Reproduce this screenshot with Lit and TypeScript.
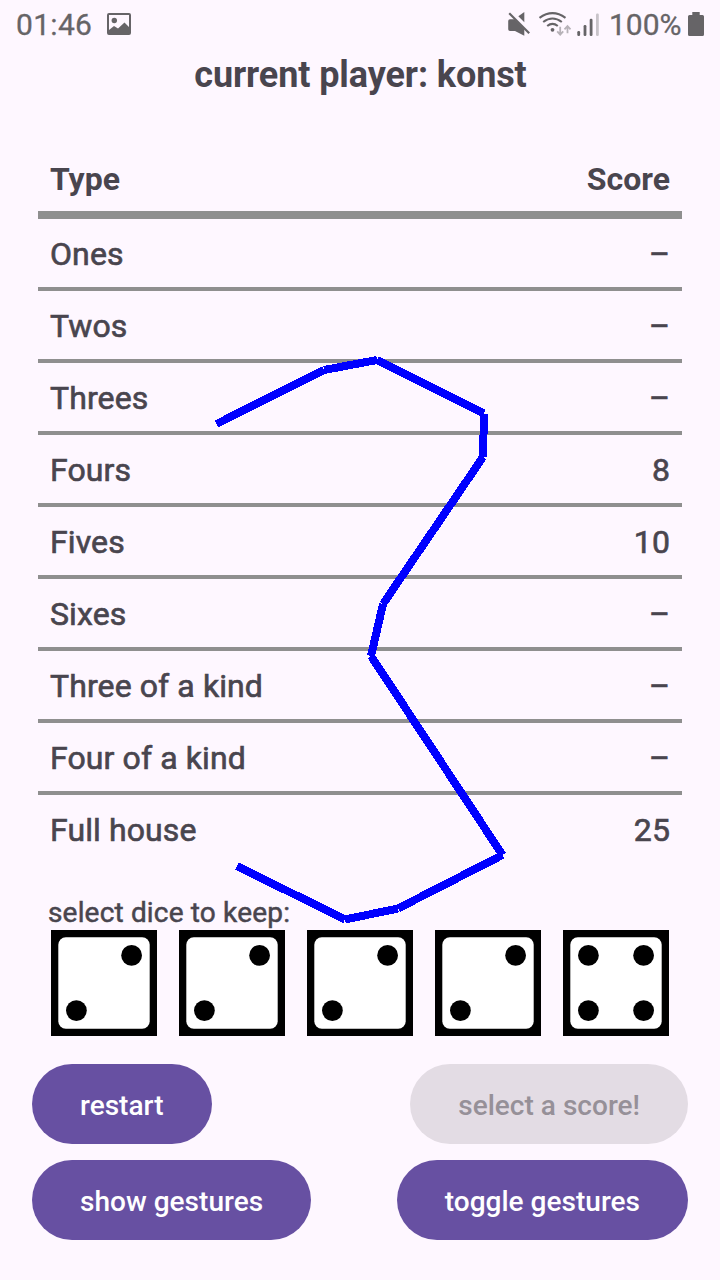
import { LitElement, html, css, svg } from "lit";
import { customElement, property } from "lit/decorators.js";

const scores: [string, string][] = [
  ["Ones", "–"],
  ["Twos", "–"],
  ["Threes", "–"],
  ["Fours", "8"],
  ["Fives", "10"],
  ["Sixes", "–"],
  ["Three of a kind", "–"],
  ["Four of a kind", "–"],
  ["Full house", "25"],
];

const gesture: [number, number][] = [
  [216.5, 424], [324, 370], [377, 360], [484, 413.5], [483, 457], [383, 604],
  [371, 656], [502.5, 855], [398, 908.5], [345, 919.5], [237, 866],
];

const pips: Record<number, [number, number][]> = {
  2: [[80.6, 25.4], [25.4, 80.6]],
  4: [[25.4, 25.4], [80.6, 25.4], [25.4, 80.6], [80.6, 80.6]],
};

@customElement("dice-face")
class DiceFace extends LitElement {
  static styles = css`
    :host { display: block; width: 106px; height: 106px; }
    svg { display: block; }
  `;
  @property({ type: Number }) value = 2;
  render() {
    return html`<svg width="106" height="106" viewBox="0 0 106 106">
      <rect width="106" height="106" fill="#000" />
      <rect x="7.3" y="7.3" width="91.4" height="91.4" rx="7.5" fill="#fff" />
      ${pips[this.value].map(([x, y]) => svg`<circle cx=${x} cy=${y} r="10.4" fill="#000" />`)}
    </svg>`;
  }
}

@customElement("status-bar")
class StatusBar extends LitElement {
  static styles = css`
    :host { display: flex; justify-content: space-between; height: 48px; padding: 0 15px 0 16px; color: #666467; }
    .side { display: flex; align-items: center; height: 48px; }
    .text { font-size: 30px; line-height: 48px; padding-top: 2px; white-space: pre; -webkit-text-stroke: 0.3px #666467; }
    .clock { width: 91px; letter-spacing: 0.3px; }
    .percent { width: 77px; letter-spacing: 0; }
    svg { display: block; }
  `;
  render() {
    return html`
      <div class="side">
        <span class="text clock">01:46</span>
        <svg width="24" height="48" viewBox="107 0 24 48" fill="#666467">
          <path fill-rule="evenodd" d="M109 13h20q2 0 2 2v18q0 2-2 2h-20q-2 0-2-2V15q0-2 2-2zM109 15v15l5-4 4 2.600 6.500-6 4.500 4.500V15z" />
          <circle cx="114.300" cy="20.500" r="2.700" />
        </svg>
      </div>
      <div class="side">
        <svg width="102" height="48" viewBox="507 0 102 48" fill="#666467">
          <path d="M508.200 21q0-1.800 1.800-1.800h4.500L524.300 29V35.800L515 31h-5q-1.800 0-1.800-1.800z" />
          <path d="M518.300 16.300L524.300 12v10.300z" />
          <path d="M509.200 13.200L529.200 33.200" stroke="#666467" stroke-width="2.200" fill="none" />
          <g fill="none" stroke="#666467" stroke-width="2.100">
            <path d="M539.500 17.800Q552.500 8.500 565.500 17.800" />
            <path d="M543.200 22Q552.500 15 561.800 22" />
            <path d="M547.200 26Q552.500 21.800 557.800 26" />
          </g>
          <circle cx="552.500" cy="29.800" r="1.900" />
          <g fill="none" stroke="#b7b2b8" stroke-width="1.800">
            <path d="M560.200 26.800V34.500M557.200 31.300L560.200 34.600L563.200 31.300" />
            <path d="M567.500 33.200V26M564.500 29.300L567.500 26L570.500 29.300" />
          </g>
          <rect x="577.300" y="31" width="2.800" height="5" rx="1.200" />
          <rect x="583.600" y="25" width="2.800" height="11" rx="1.200" />
          <rect x="589.700" y="18.700" width="2.800" height="17.300" rx="1.200" />
          <rect x="596" y="13.500" width="2.800" height="22.500" rx="1.200" fill="#c8c3c9" />
        </svg>
        <span class="text percent">100%</span>
        <svg width="19" height="48" viewBox="686 0 19 48" fill="#666467">
          <path d="M692.300 12h7.400v3h2.800q1.500 0 1.500 1.500V34.500q0 1.500-1.500 1.500h-13q-1.500 0-1.500-1.500V16.500q0-1.500 1.500-1.500h2.800z" />
        </svg>
      </div>
    `;
  }
}

@customElement("app-root")
class AppRoot extends LitElement {
  static styles = css`
    :host {
      display: flex; flex-direction: column; position: relative; box-sizing: border-box;
      width: 720px; height: 1280px; overflow: hidden;
      background: #fef7ff; color: #49454e; font-family: Roboto, sans-serif;
    }
    .title { margin: 0; height: 54px; line-height: 55px; padding-left: 1px; text-align: center; font-size: 36px; font-weight: 700; letter-spacing: -0.1px; }
    .table { margin: 41px 38px 0; font-size: 32px; line-height: 38px; }
    .row {
      display: flex; justify-content: space-between; align-items: center;
      height: 67px; padding: 1px 12px 0; border-bottom: 4px solid #8f8f8f;
      font-weight: 400; letter-spacing: 0.1px; -webkit-text-stroke: 0.65px #49454e;
    }
    .row:last-child { border-bottom: 0; }
    .head { height: 65px; padding-top: 3px; font-weight: 700; letter-spacing: 0; border-bottom-width: 8px; -webkit-text-stroke: 0; }
    .prompt {
      margin: 33px 48px 0; height: 34px; line-height: 33px; font-size: 28px; font-weight: 400;
      letter-spacing: 0.17px; -webkit-text-stroke: 0.5px #49454e;
    }
    .dice { display: flex; gap: 22px; padding: 0 51px; }
    .actions { display: grid; gap: 16px; padding: 28px 32px 0; }
    .pair { display: flex; justify-content: space-between; }
    .btn {
      height: 80px; padding: 3px 48px 0; border: 0; border-radius: 40px; background: #6750a2; color: #fff;
      font: 500 28px/33px Roboto, sans-serif; letter-spacing: 0.02px; white-space: nowrap;
    }
    .btn:disabled { background: #e3dce4; color: #969098; }
    .stroke { position: absolute; inset: 0; pointer-events: none; }
  `;
  render() {
    return html`
      <status-bar></status-bar>
      <h1 class="title">current player: konst</h1>
      <div class="table">
        <div class="row head"><span>Type</span><span>Score</span></div>
        ${scores.map(([name, score]) => html`<div class="row"><span>${name}</span><span>${score}</span></div>`)}
      </div>
      <div class="prompt">select dice to keep:</div>
      <div class="dice">${[2, 2, 2, 2, 4].map((v) => html`<dice-face .value=${v}></dice-face>`)}</div>
      <div class="actions">
        <div class="pair"><button class="btn">restart</button><button class="btn" disabled>select a score!</button></div>
        <div class="pair"><button class="btn">show gestures</button><button class="btn">toggle gestures</button></div>
      </div>
      <svg class="stroke" width="720" height="1280" viewBox="0 0 720 1280" stroke="#00f" stroke-width="8" shape-rendering="crispEdges">
        ${gesture.slice(1).map(([x, y], i) => svg`<line x1=${gesture[i][0]} y1=${gesture[i][1]} x2=${x} y2=${y} />`)}
      </svg>
    `;
  }
}
